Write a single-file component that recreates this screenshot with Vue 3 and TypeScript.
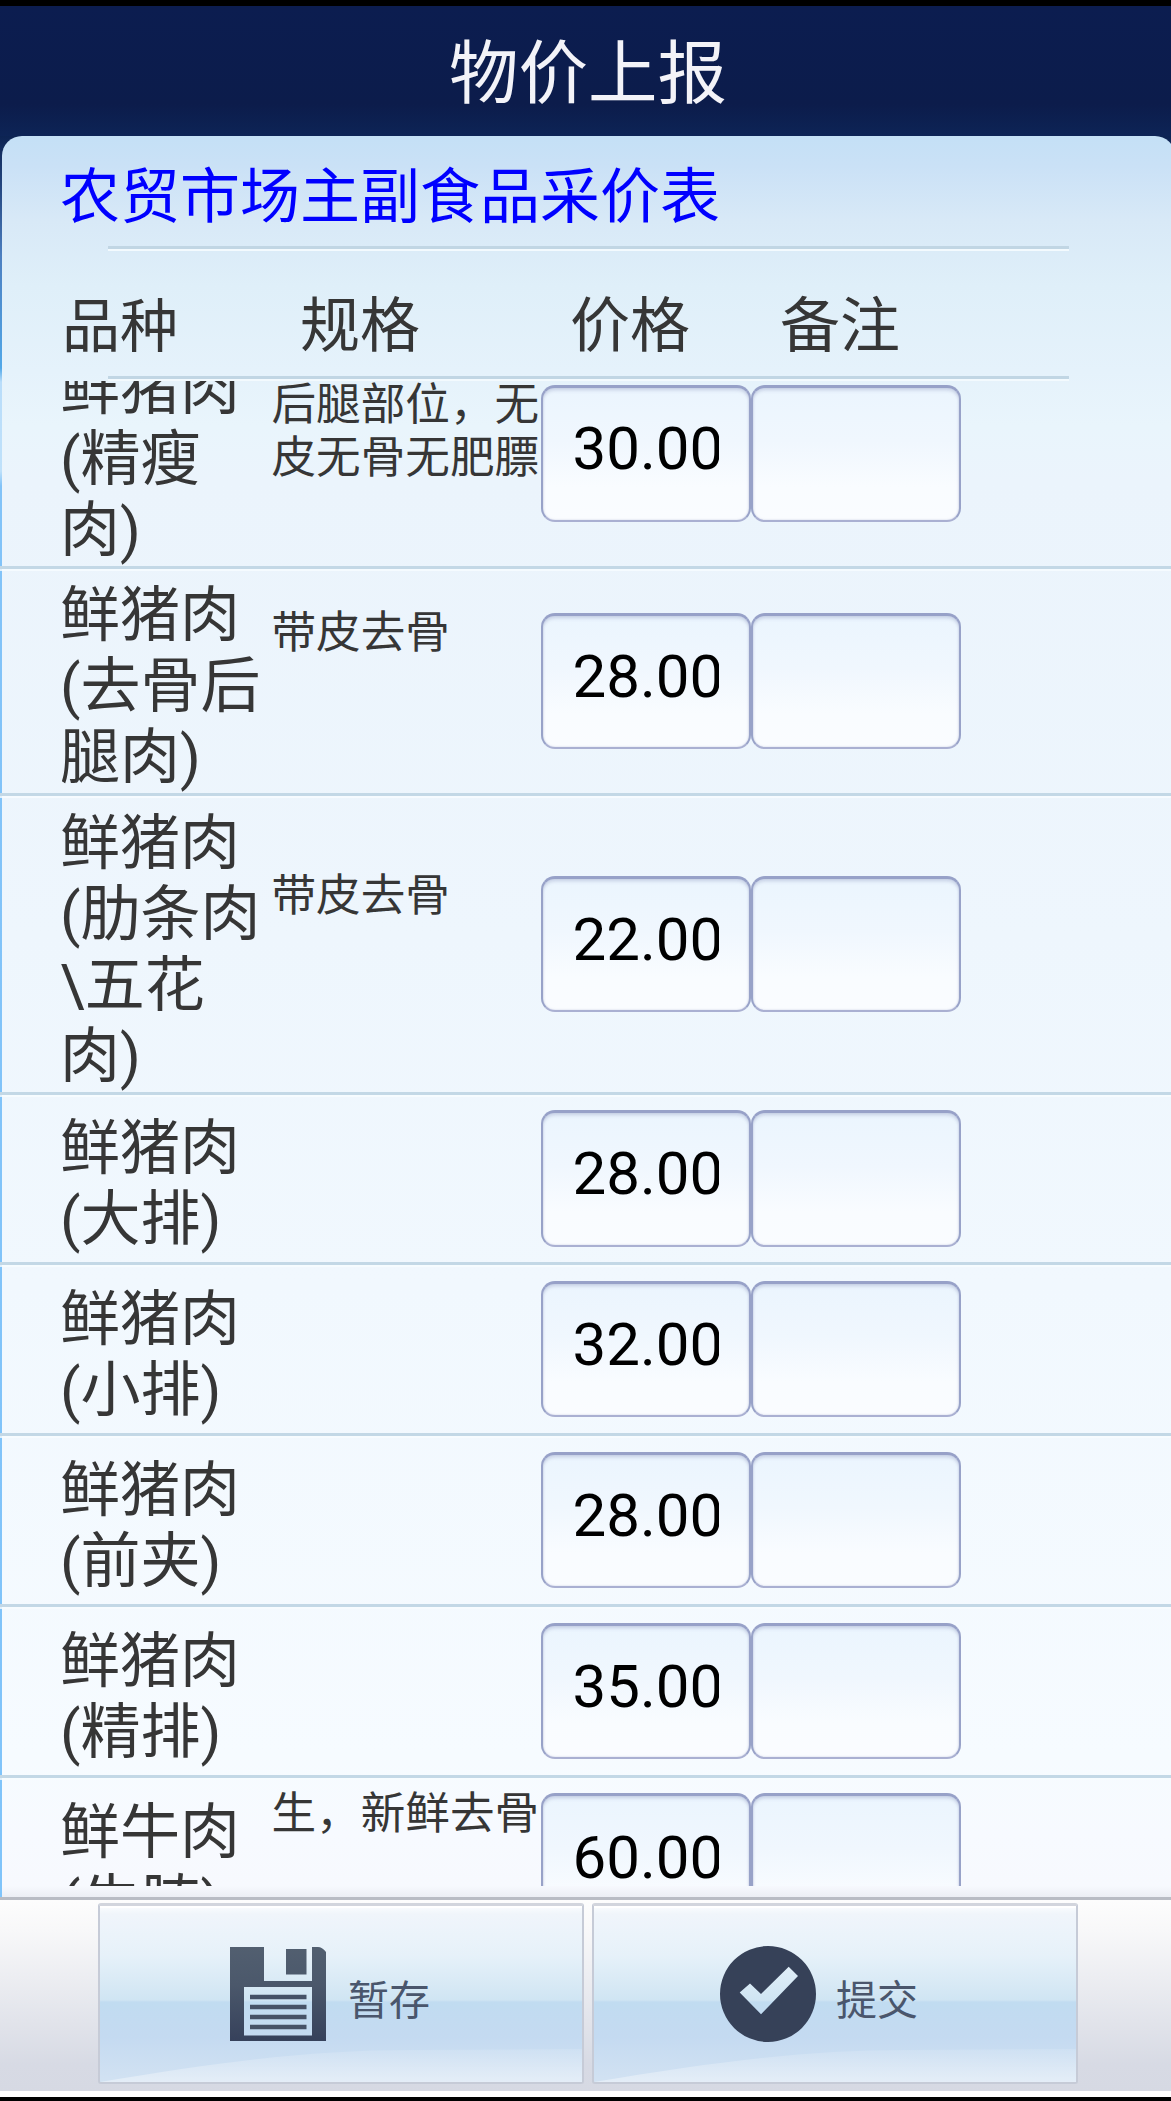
<script setup lang="ts">
import { ref } from 'vue'

interface PriceItem {
  name: string[]
  spec: string[]
  price: string
  remark: string
}

const columns: string[] = ['品种', '规格', '价格', '备注']

const items = ref<PriceItem[]>([
  { name: ['鲜猪肉', '(精瘦', '肉)'], spec: ['后腿部位，无', '皮无骨无肥膘'], price: '30.00', remark: '' },
  { name: ['鲜猪肉', '(去骨后', '腿肉)'], spec: ['带皮去骨'], price: '28.00', remark: '' },
  { name: ['鲜猪肉', '(肋条肉', '\\五花', '肉)'], spec: ['带皮去骨'], price: '22.00', remark: '' },
  { name: ['鲜猪肉', '(大排)'], spec: [], price: '28.00', remark: '' },
  { name: ['鲜猪肉', '(小排)'], spec: [], price: '32.00', remark: '' },
  { name: ['鲜猪肉', '(前夹)'], spec: [], price: '28.00', remark: '' },
  { name: ['鲜猪肉', '(精排)'], spec: [], price: '35.00', remark: '' },
  { name: ['鲜牛肉', '(牛腩)'], spec: ['生，新鲜去骨'], price: '60.00', remark: '' },
])
</script>

<template>
  <div class="page">
    <header class="topbar">物价上报</header>
    <main class="body">
      <section class="panel">
        <h1 class="title">农贸市场主副食品采价表</h1>
        <div class="rule"></div>
        <div class="columns">
          <span v-for="c in columns" :key="c">{{ c }}</span>
        </div>
        <div class="rule"></div>
      </section>
      <div class="list">
        <div class="scroll">
          <div v-for="(item, i) in items" :key="i" class="row">
            <div class="name">
              <div v-for="line in item.name" :key="line">{{ line }}</div>
            </div>
            <div class="spec">
              <div v-for="line in item.spec" :key="line">{{ line }}</div>
            </div>
            <input v-model="item.price" class="field" type="text" />
            <input v-model="item.remark" class="field" type="text" />
          </div>
        </div>
      </div>
    </main>
    <footer class="footer">
      <button class="btn" type="button">
        <svg class="wave" viewBox="0 0 480 176" preserveAspectRatio="none">
          <path d="M0 176 C120 156 210 144 310 144 L480 143 V176 Z" fill="url(#wave-a)" />
          <defs>
            <linearGradient id="wave-a" x1="0" y1="0" x2="0" y2="1">
              <stop offset="0" stop-color="#fff" stop-opacity=".12" />
              <stop offset="1" stop-color="#fff" stop-opacity=".4" />
            </linearGradient>
          </defs>
        </svg>
        <svg class="icon disk" width="97" height="96" viewBox="0 0 97 96">
          <defs>
            <linearGradient id="disk-fill" x1="0" y1="0" x2="0" y2="1">
              <stop offset="0" stop-color="#525f70" />
              <stop offset=".4" stop-color="#4b586b" />
              <stop offset="1" stop-color="#36415b" />
            </linearGradient>
          </defs>
          <path
            fill="url(#disk-fill)"
            fill-rule="evenodd"
            d="M0 1H34V35H82V1H88Q92 1 96 6V95H0ZM14 41V89.500H82V41ZM56 3H76.500V28.500H56Z"
          />
          <path
            fill="#465267"
            d="M20 48.800H76.500V53.200H20ZM20 58.800H76.500V63.200H20ZM20 68.800H76.500V73.200H20ZM20 78.800H76.500V83.200H20Z"
          />
        </svg>
        <span>暂存</span>
      </button>
      <button class="btn submit" type="button">
        <svg class="wave" viewBox="0 0 480 176" preserveAspectRatio="none">
          <path d="M0 176 C120 156 210 144 310 144 L480 143 V176 Z" fill="url(#wave-a)" />
        </svg>
        <svg class="icon" width="97" height="96" viewBox="0 0 97 96">
          <path
            fill="#364158"
            fill-rule="evenodd"
            d="M48 0A48 48 0 0 1 48 96A48 48 0 0 1 48 0ZM19.700 46.500L41 68.300L78 30L68.700 20.700L41 48L30 37.500Z"
          />
        </svg>
        <span>提交</span>
      </button>
    </footer>
  </div>
</template>

<style>
body {
  margin: 0;
  background: #000;
}
</style>

<style scoped>
.page {
  width: 1171px;
  height: 2101px;
  box-sizing: border-box;
  padding: 6px 0 4px;
  background: #000;
  display: flex;
  flex-direction: column;
  overflow: hidden;
  color: #363636;
  font-family: Roboto, 'Noto Sans CJK SC', sans-serif;
}
.topbar {
  flex: none;
  height: 130px;
  line-height: 137px;
  text-align: center;
  text-indent: 5px;
  font-size: 69.5px;
  color: #f3f3f8;
  background: linear-gradient(#0c1d50 0, #0c1c4b 98px, #0d2456 130px);
}
.body {
  flex: none;
  height: 1761px;
  box-sizing: border-box;
  padding-left: 2px;
  margin-right: -4px;
  background: linear-gradient(#0c2352 0, #24467f 50px, #4c7fc0 120px, #52a8e8 232px, #b9ddfa 246px, #bfe1fa 335px, #82c3f8 350px, #80c4fa 100%);
  display: flex;
  flex-direction: column;
  position: relative;
}
.body::before {
  content: '';
  position: absolute;
  inset: 0 0 0 2px;
  border-radius: 20px 20px 0 0;
  background: linear-gradient(#c4e0f6 0, #cae1f6 30px, #d8e9f7 85px, #dfeff9 150px, #e5f2fb 235px, #e9f5fc 290px, #ebf4fc 345px, #eef6fd 800px, #f1f8fe 1150px, #f6fbff 1620px, #f7faff 1700px, #f7f9fe 1750px, #eceef4 1761px);
}
.panel {
  flex: none;
  position: relative;
  height: 245px;
}
.title {
  margin: 0;
  height: 110px;
  line-height: 123px;
  padding-left: 58px;
  font-size: 60px;
  font-weight: 400;
  color: #0000ff;
  white-space: nowrap;
}
.rule {
  width: 961px;
  height: 3px;
  margin-left: 106px;
  background: #c1d6e4;
  border-bottom: 2px solid #f3fafe;
}
.columns {
  height: 125px;
  line-height: 152px;
  font-size: 60px;
  padding-left: 58px;
  display: grid;
  grid-template-columns: 240px 270px 210px 200px;
  white-space: nowrap;
}
.columns span:first-child {
  padding-left: 2px;
  font-size: 58px;
}
.list {
  flex: none;
  position: relative;
  height: 1505px;
  margin-left: -2px;
  overflow: hidden;
}
.scroll {
  margin-top: -40px;
}
.row {
  box-sizing: border-box;
  min-height: 170.8px;
  padding: 5.75px 0 5.75px 60px;
  border-bottom: 3px solid #c3d8e6;
  box-shadow: 0 2px 0 rgba(247, 252, 255, 0.8);
  display: flex;
  align-items: center;
}
.name {
  width: 211.5px;
  margin: 6px 0 -6px;
  font-size: 60px;
  line-height: 71px;
  white-space: nowrap;
}
.spec {
  width: 269px;
  height: 148px;
  font-size: 44.6px;
  line-height: 53px;
  white-space: nowrap;
}
.field {
  width: 210px;
  height: 136.5px;
  box-sizing: border-box;
  margin: 0;
  padding: 0 29.5px 10px 30px;
  border: 2px solid #98a2c8;
  border-top: 3px solid #97a1c8;
  border-bottom-color: #aab0d2;
  border-radius: 14px;
  outline: none;
  font-family: Roboto, sans-serif;
  font-size: 60px;
  color: #000;
  background: linear-gradient(#ebf5fe 0, #f0f7fe 40%, #f9fcff 75%, #fafcff 100%);
  box-shadow: inset 0 3px 3px rgba(151, 161, 200, 0.3), inset 0 0 2px rgba(151, 161, 200, 0.5);
}
.footer {
  flex: none;
  height: 200px;
  box-sizing: border-box;
  border-top: 3px solid #b9bcc4;
  border-bottom: 6px solid #fff;
  padding: 3px 93px 0 98px;
  display: flex;
  gap: 8px;
  background: linear-gradient(#fdfdfd 0, #f8f8f9 30px, #d7dae4 165px, #d6d9e3 100%);
}
.btn {
  flex: none;
  width: 486px;
  position: relative;
  height: 181px;
  box-sizing: border-box;
  margin: 0;
  padding: 0 0 0 130px;
  border: 2px solid #c6cbd7;
  border-top: 3px solid #d2d5dd;
  border-radius: 3px;
  display: flex;
  align-items: flex-start;
  font-family: 'Noto Sans CJK SC', sans-serif;
  font-size: 41px;
  color: #4a566c;
  background: linear-gradient(#fbfdff 0, #f0f5fb 8px, #e6f1f9 50px, #d0e5f3 94px, #c1dcf1 96px, #c4daf1 130px, #d2e2f2 100%);
  box-shadow: inset 0 2px 0 #fff;
}
.submit {
  padding-left: 126px;
}
.wave {
  position: absolute;
  inset: 0;
  width: 100%;
  height: 100%;
}
.icon {
  position: relative;
  flex: none;
  margin-top: 40px;
}
.btn span {
  position: relative;
  margin: 60.5px 0 0 21px;
  line-height: 60px;
}
.submit span {
  margin-left: 19px;
}
</style>
